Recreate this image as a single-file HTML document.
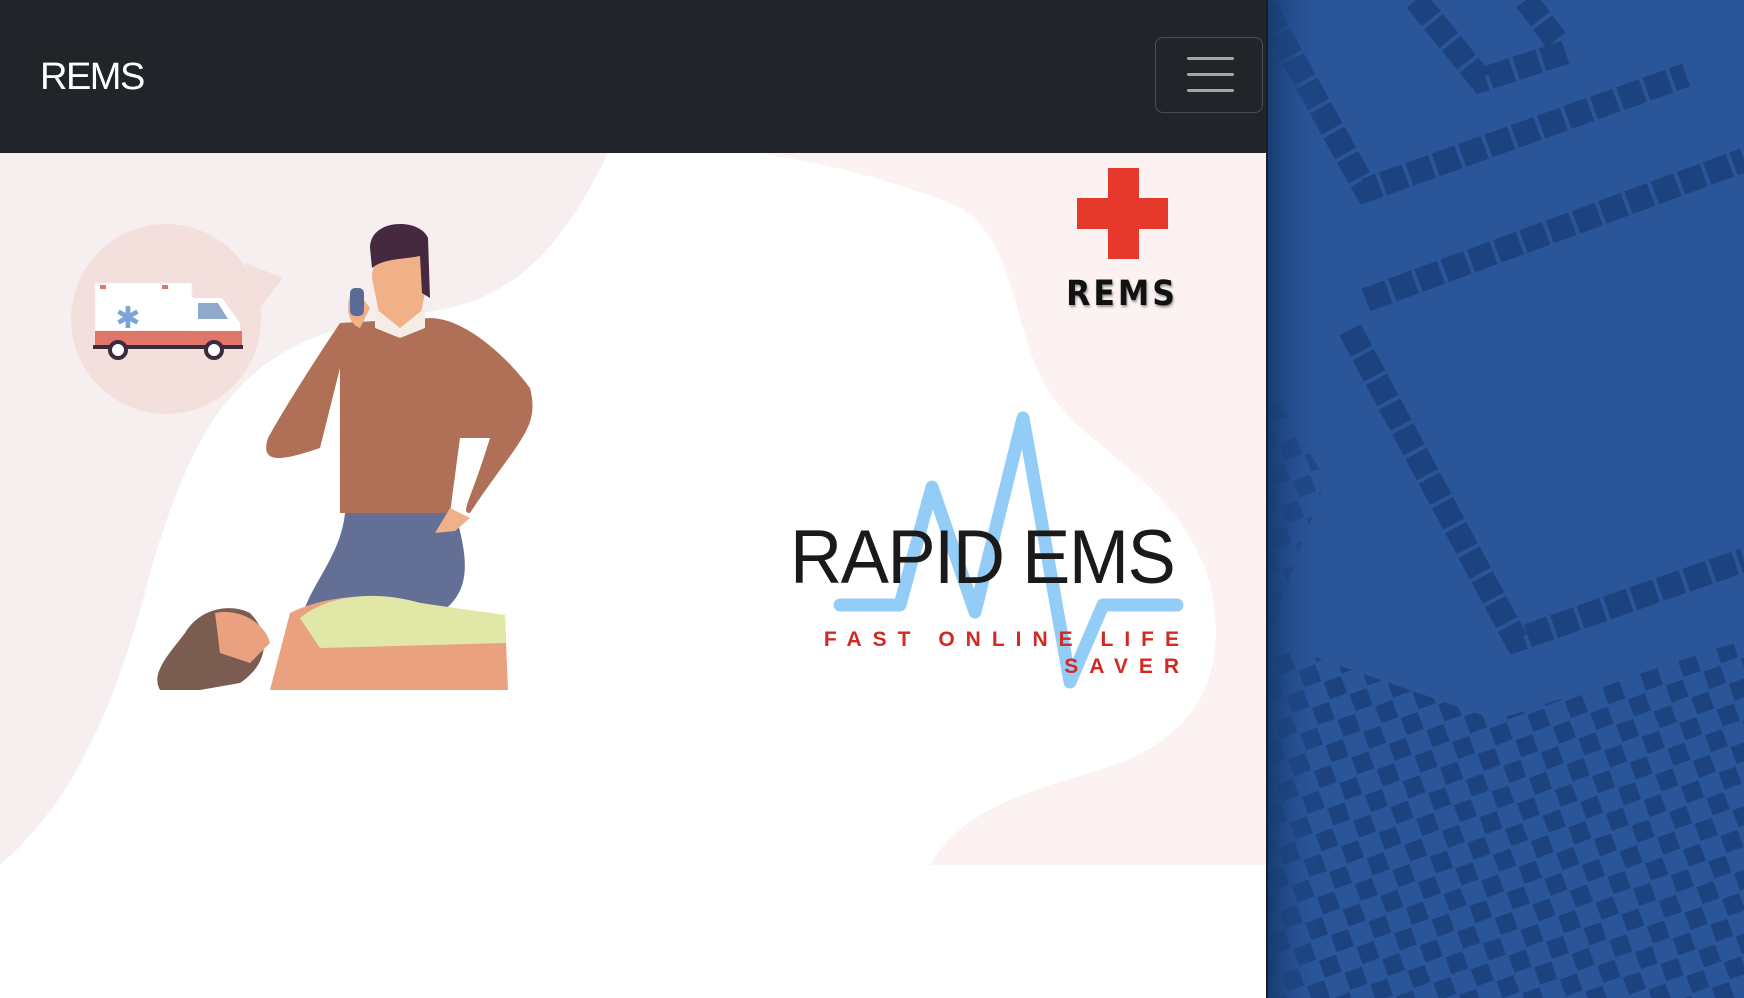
<!DOCTYPE html>
<html><head><meta charset="utf-8"><style>
html,body{margin:0;padding:0;width:1744px;height:998px;overflow:hidden;background:#2a5599;font-family:"Liberation Sans",sans-serif}
#panel{position:absolute;left:0;top:0;width:1266px;height:998px;background:#fff;border-right:2px solid #1a1d22}
#nav{position:absolute;left:0;top:0;width:1266px;height:153px;background:#212529}
#brand{position:absolute;left:40px;top:56px;color:#fff;font-size:38px;letter-spacing:-1.5px}
#tog{position:absolute;left:1155px;top:37px;width:108px;height:76px;border:1.5px solid #4a4e53;border-radius:8px;box-sizing:border-box}
#tog i{position:absolute;left:31px;width:47px;height:3px;background:#a3a5a8;border-radius:2px}
</style></head><body>
<svg style="position:absolute;left:1266px;top:0" width="478" height="998">
<defs><linearGradient id="sh" x1="0" x2="1"><stop offset="0" stop-color="#163a70"/><stop offset=".12" stop-color="#2a5599" stop-opacity="0"/></linearGradient>
<pattern id="sq" width="40" height="40" patternUnits="userSpaceOnUse" patternTransform="rotate(-20)"><rect x="1" y="1" width="18" height="18" fill="#1c427f"/><rect x="21" y="21" width="18" height="18" fill="#1c427f"/></pattern></defs>
<rect width="478" height="998" fill="#2a5599"/>
<g fill="none" stroke="#1c427f" stroke-width="24" stroke-dasharray="24 4">
<path d="M0 10 L100 190 L420 75"/><path d="M150 0 L215 80 L300 52"/><path d="M260 0 L290 40"/>
<path d="M100 300 L478 160"/><path d="M84 330 L250 640 L478 560"/>
</g>
<path d="M0 640 L230 720 L478 640 L478 998 L0 998Z" fill="url(#sq)"/>
<path d="M0 380 L60 480 L0 640Z" fill="url(#sq)" opacity=".8"/>
<rect width="478" height="998" fill="url(#sh)"/>
</svg>
<div id="panel">
<svg style="position:absolute;left:0;top:153px" width="1266" height="712">
<path d="M0 0 L608 0 C560 100 510 150 420 160 C250 180 200 250 150 420 C110 580 60 660 0 712Z" fill="#f7efef"/>
<path d="M760 0 L1266 0 L1266 712 L930 712 C960 660 1020 640 1090 620 C1200 590 1230 520 1210 430 C1180 330 1090 300 1050 240 C1010 180 1020 80 950 50 C870 20 820 10 760 0Z" fill="#fcf2f1"/>
</svg>
<div id="nav"><div id="brand">REMS</div><div id="tog"><i style="top:19px"></i><i style="top:35px"></i><i style="top:51px"></i></div></div>
<svg style="position:absolute;left:0;top:153px" width="600" height="560">
<circle cx="166" cy="166" r="95" fill="#f3e0dc"/>
<path d="M245 110 L283 125 L260 155Z" fill="#f3e0dc"/>
<rect x="95" y="130" width="97" height="48" fill="#fff" stroke="#eee"/>
<path d="M190 145 L222 145 L240 170 L240 190 L190 190Z" fill="#fff"/>
<path d="M198 150 L218 150 L228 166 L198 166Z" fill="#8fa9cc"/>
<rect x="95" y="178" width="147" height="14" fill="#e0766a"/>
<rect x="93" y="192" width="150" height="4" fill="#3b2b3d"/>
<circle cx="118" cy="197" r="8" fill="#fff" stroke="#3b2b3d" stroke-width="4"/>
<circle cx="214" cy="197" r="8" fill="#fff" stroke="#3b2b3d" stroke-width="4"/>
<text x="128" y="175" font-size="30" fill="#7aa3d8" text-anchor="middle">✱</text>
<rect x="100" y="132" width="6" height="4" fill="#e0766a"/><rect x="162" y="132" width="6" height="4" fill="#e0766a"/>
<path d="M340 170 C330 185 290 245 268 285 C258 315 290 305 320 295 L340 215 L340 360 L450 360 L460 285 L490 285 C470 350 460 360 470 360 C520 285 540 275 530 235 C500 195 460 165 430 165 Z" fill="#b07058"/>
<path d="M345 360 L455 360 C470 410 470 440 440 460 L370 475 L355 480 L300 480 C300 440 340 410 345 360Z" fill="#646f96"/>
<path d="M395 95 C410 85 430 105 428 125 L420 165 L400 175 L380 165 L372 125 C372 110 380 100 395 95Z" fill="#f0b088"/>
<path d="M370 95 C370 65 420 65 428 85 L430 145 L422 140 L420 103 C400 107 385 105 372 115Z" fill="#45293f"/>
<path d="M375 155 L400 175 L425 155 L425 175 L400 185 L375 175Z" fill="#f6ece6"/>
<path d="M355 135 C345 145 345 170 360 175 L370 155Z" fill="#f0b088"/>
<rect x="350" y="135" width="14" height="28" rx="5" fill="#5b6a96"/>
<path d="M450 355 L470 365 L455 378 L435 380 Z" fill="#f0b088"/>
<path d="M290 460 C320 445 360 440 400 446 L505 465 L508 537 L270 537 Z" fill="#eaa17f"/>
<path d="M300 465 C330 440 380 438 420 450 L505 462 L506 490 L320 495Z" fill="#e1e7a6"/>
<path d="M185 480 C200 455 230 450 250 460 C270 480 270 510 240 530 L200 537 L160 537 C150 520 170 500 185 480Z" fill="#7a5c50"/>
<path d="M215 460 C240 455 265 470 270 490 L250 510 L220 500Z" fill="#eaa17f"/>
</svg>
<svg style="position:absolute;left:0;top:0" width="1266" height="760">
<rect x="1108" y="168" width="31" height="91" fill="#e7392b"/>
<rect x="1077" y="198" width="91" height="31" fill="#e7392b"/>
<polyline points="840,605 900,605 932,487 975,612 1023,418 1070,682 1103,605 1177,605" fill="none" stroke="#93cdf7" stroke-width="13" stroke-linecap="round" stroke-linejoin="round"/>
</svg>
<div style="position:absolute;left:1062px;top:274px;width:120px;text-align:center;font:bold 35px 'DejaVu Sans Condensed','DejaVu Sans',sans-serif;letter-spacing:3px;color:#111;text-shadow:1px 2px 2px #999">REMS</div>
<div style="position:absolute;left:790px;top:520px;font-size:76px;font-weight:300;color:#1a1a1a;letter-spacing:-1.5px;line-height:1;transform:scaleX(0.95);transform-origin:left">RAPID EMS</div>
<div style="position:absolute;right:76px;top:626px;text-align:right;font-weight:bold;font-size:21px;color:#d12a22;letter-spacing:11px;line-height:27px">FAST ONLINE LIFE<br>SAVER</div>
</div>
</body></html>
